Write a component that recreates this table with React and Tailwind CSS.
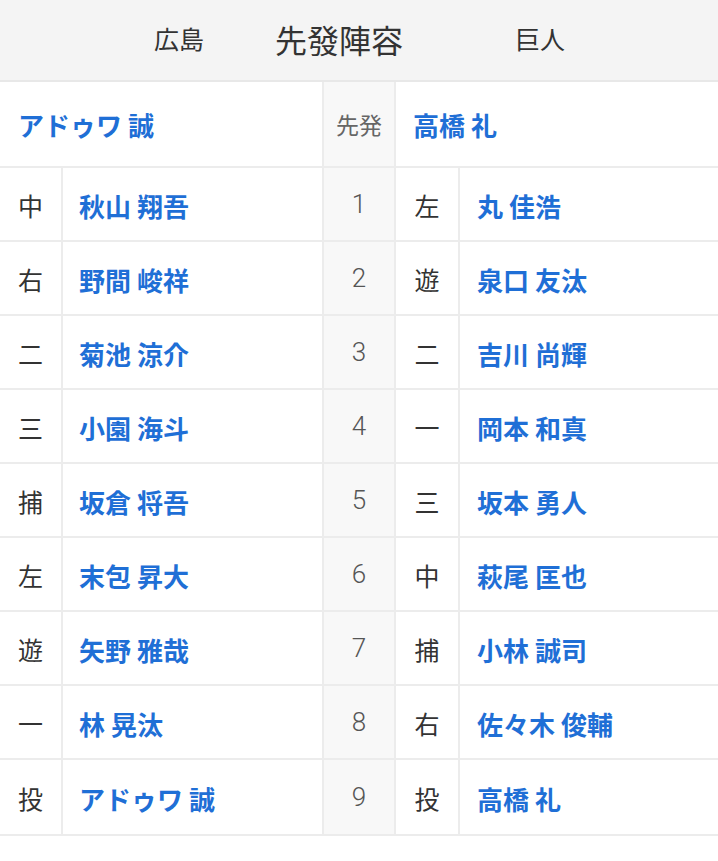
const rows = [
	["中", "秋山 翔吾", 1, "左", "丸 佳浩"],
	["右", "野間 峻祥", 2, "遊", "泉口 友汰"],
	["二", "菊池 涼介", 3, "二", "吉川 尚輝"],
	["三", "小園 海斗", 4, "一", "岡本 和真"],
	["捕", "坂倉 将吾", 5, "三", "坂本 勇人"],
	["左", "末包 昇大", 6, "中", "萩尾 匡也"],
	["遊", "矢野 雅哉", 7, "捕", "小林 誠司"],
	["一", "林 晃汰", 8, "右", "佐々木 俊輔"],
	["投", "アドゥワ 誠", 9, "投", "高橋 礼"],
];

const font = { fontFamily: '"Noto Sans CJK JP", "Noto Sans", sans-serif' };
const digits = { fontFamily: 'Roboto, "Noto Sans", sans-serif' };

export default function App() {
	return (
		<div className="w-[718px] h-[861px] bg-white overflow-hidden" style={font}>
			<div className="h-[82px] bg-[#f4f4f4] border-b-2 border-[#e8e8e8] flex items-center text-[#333]">
				<div className="w-[154px]" />
				<div className="text-[25px] w-[121px] -mt-[2px]">広島</div>
				<div className="text-[32px] w-[240px] -mt-[2px]">先發陣容</div>
				<div className="text-[25px] -mt-[2px]">巨人</div>
			</div>

			<div className="grid grid-cols-[63px_259px_74px_64px_1fr] border-b-2 border-[#ececec]">
				<div className="col-span-2 h-[86px] flex items-center pl-[18px] text-[26px] font-bold text-[#1f6fd6] border-b-2 border-[#ececec]">
					アドゥワ 誠
				</div>
				<div className="h-[86px] flex items-center justify-center bg-[#f8f8f8] border-x-2 border-b-2 border-[#ececec] text-[23px] text-[#666]">
					先発
				</div>
				<div className="col-span-2 h-[86px] flex items-center pl-[17px] text-[26px] font-bold text-[#1f6fd6] border-b-2 border-[#ececec]">
					高橋 礼
				</div>

				{rows.map(([lp, ln, num, rp, rn], i) => {
					const line = i < 8 ? "border-b-2" : "";
					return (
						<div key={i} className="contents">
							<div
								className={`h-[74px] flex items-center justify-center pt-[3px] text-[25px] text-[#333] border-r-2 border-[#ececec] ${line}`}
							>
								{lp}
							</div>
							<div
								className={`h-[74px] flex items-center pl-[16px] pt-[3px] text-[26px] font-bold text-[#1f6fd6] border-[#ececec] ${line}`}
							>
								{ln}
							</div>
							<div
								className={`h-[74px] flex items-center justify-center bg-[#f8f8f8] border-x-2 border-[#ececec] text-[26px] font-light text-[#555] ${line}`}
								style={digits}
							>
								{num}
							</div>
							<div
								className={`h-[74px] flex items-center justify-center pt-[3px] text-[25px] text-[#333] border-r-2 border-[#ececec] ${line}`}
							>
								{rp}
							</div>
							<div
								className={`h-[74px] flex items-center pl-[17px] pt-[3px] text-[26px] font-bold text-[#1f6fd6] border-[#ececec] ${line}`}
							>
								{rn}
							</div>
						</div>
					);
				})}
			</div>
			<div className="h-[25px]" />
			<div className="border-t border-[#f0f0f0]" />
		</div>
	);
}
